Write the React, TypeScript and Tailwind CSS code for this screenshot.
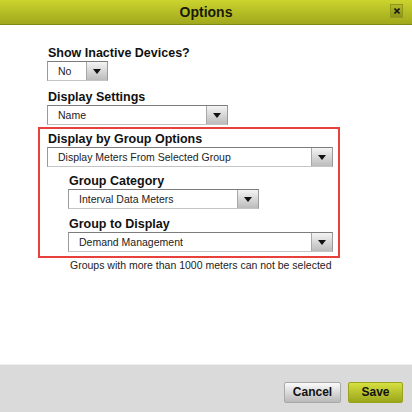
import React from "react";

const Arrow = () => (
  <div className="w-[21px] h-full flex items-center justify-center border-l border-[#a8a8a8] bg-gradient-to-b from-[#f4f4f4] to-[#bcbcbc]">
    <svg width="8" height="5" viewBox="0 0 8 5">
      <path d="M0 0 L8 0 L4 5 Z" fill="#111" />
    </svg>
  </div>
);

const Select = ({ value, width }: { value: string; width: string }) => (
  <div
    className={`${width} h-[20px] flex bg-white border border-[#9a9a9a] border-t-[#7c7c7c] border-b-[#c4c4c4]`}
  >
    <div className="flex-1 pl-[10px] text-[10.5px] leading-[18px] text-[#222] truncate">{value}</div>
    <Arrow />
  </div>
);

const Label = ({ children, className = "" }: { children: React.ReactNode; className?: string }) => (
  <div className={`text-[12.5px] leading-[16px] font-bold text-[#111] ${className}`}>{children}</div>
);

export default function App() {
  return (
    <div
      className="w-[412px] h-[412px] flex flex-col bg-white overflow-hidden"
      style={{ fontFamily: '"Liberation Sans", Arial, sans-serif' }}
    >
      {/* title bar */}
      <div className="h-[25px] flex items-center justify-center relative bg-gradient-to-b from-[#cbd42e] to-[#a0a81c] border-b border-[#808a12]">
        <span className="text-[14px] font-bold text-[#1a1a0a]">Options</span>
        <div className="absolute right-[9px] top-[4px] w-[13px] h-[14px] flex items-center justify-center bg-gradient-to-b from-[#b4bb28] to-[#8c9318] border border-[#8f971c]">
          <svg width="6" height="6" viewBox="0 0 6 6">
            <path d="M0.5 0.5 L5.5 5.5 M5.5 0.5 L0.5 5.5" stroke="#1a1a1a" strokeWidth="1.6" />
          </svg>
        </div>
      </div>

      {/* body */}
      <div className="flex-1 pt-[20px] pl-[47px]">
        <Label className="ml-px">Show Inactive Devices?</Label>
        <Select value="No" width="w-[61px]" />
        <Label className="ml-px mt-[8px]">Display Settings</Label>
        <Select value="Name" width="w-[181px]" />

        <div className="-ml-[9px] mt-[2px] w-[302px] border-2 border-[#e8413c] pt-[2px] pl-[7px] pr-[5px] pb-[4px]">
          <Label className="ml-px">Display by Group Options</Label>
          <Select value="Display Meters From Selected Group" width="w-[286px]" />
          <div className="pl-[21px]">
            <Label className="ml-px mt-[6px]">Group Category</Label>
            <Select value="Interval Data Meters" width="w-[191px]" />
            <Label className="ml-px mt-[7px]">Group to Display</Label>
            <Select value="Demand Management" width="w-[265px]" />
          </div>
        </div>
        <div className="ml-[23px] mt-px text-[10.5px] leading-[13px] text-[#222]">
          Groups with more than 1000 meters can not be selected
        </div>
      </div>

      {/* footer */}
      <div className="h-[48px] bg-[#dadada] border-t border-[#efefef] flex items-center justify-end gap-[7px] pr-[9px] pt-[7px]">
        <button className="w-[57px] h-[21px] text-[12px] font-bold text-[#111] rounded-[2px] border border-[#a9a9a9] bg-gradient-to-b from-[#fbfbfb] to-[#b9b9b9]">
          Cancel
        </button>
        <button className="w-[55px] h-[21px] text-[12px] font-bold text-[#111] rounded-[2px] border border-[#9aa31c] bg-gradient-to-b from-[#d6e03e] to-[#9ba51b]">
          Save
        </button>
      </div>
    </div>
  );
}
